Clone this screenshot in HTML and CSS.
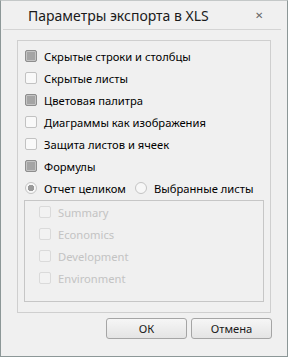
FILE: index.html
```html
<!DOCTYPE html>
<html>
<head>
  <title>Параметры экспорта в XLS</title>
  <link rel="stylesheet" href="styles.css">
</head>
<body>
  <div class="dialog">
    <div class="titlebar">
      <span class="title">Параметры экспорта в XLS</span>
      <span class="close">&#x2715;</span>
    </div>
    <div class="sep"></div>

    <div class="group">
      <label class="row"><span class="box checked"></span>Скрытые строки и столбцы</label>
      <label class="row"><span class="box"></span>Скрытые листы</label>
      <label class="row"><span class="box checked"></span>Цветовая палитра</label>
      <label class="row"><span class="box"></span>Диаграммы как изображения</label>
      <label class="row"><span class="box"></span>Защита листов и ячеек</label>
      <label class="row"><span class="box checked"></span>Формулы</label>
      <div class="row radios">
        <label class="radio-item"><span class="radio on"></span>Отчет целиком</label>
        <label class="radio-item"><span class="radio"></span>Выбранные листы</label>
      </div>
      <div class="sheets">
        <label class="row disabled"><span class="box"></span>Summary</label>
        <label class="row disabled"><span class="box"></span>Economics</label>
        <label class="row disabled"><span class="box"></span>Development</label>
        <label class="row disabled"><span class="box"></span>Environment</label>
      </div>
    </div>

    <div class="buttons">
      <button class="btn">ОК</button>
      <button class="btn">Отмена</button>
    </div>
  </div>
</body>
</html>
```

FILE: styles.css
```css
body {margin: 0; font: 11.2px "Noto Sans", "Open Sans", sans-serif; color: #000;}

.dialog {
  width: 288px;
  height: 357px;
  box-sizing: border-box;
  border: 1px solid #8c9797;
  border-top-color: #c4c8c8;
  background: #f0f0f0;
  display: flex;
  flex-direction: column;
}

.titlebar {
  height: 28px;
  display: flex;
  align-items: center;
  justify-content: space-between;
  padding: 0 24px 0 27px;
}
.title {font-size: 14px; color: #1a1a1a;}
.close {font-size: 10px; color: #666;}

.sep {height: 1px; margin: 0 6px 0 2px; background: #d4d4d4;}

.group {
  margin: 10px 16px 0 16px;
  height: 273px;
  box-sizing: border-box;
  border: 1px solid #cfcfcf;
  padding: 4px 6px 0 6px;
}

.row {
  height: 22px;
  display: flex;
  align-items: center;
  padding-left: 1px;
  white-space: nowrap;
}

.box {
  width: 10px;
  height: 10px;
  border: 1px solid #c2c2c2;
  border-radius: 2px;
  background: #f9f9f9;
  margin-right: 7px;
  flex: none;
}
.box.checked {
  border-color: #8e8e8e;
  background: #a5a5a5;
  box-shadow: inset 0 0 0 1px #c4c4c4;
}

.radio-item {display: flex; align-items: center; margin-right: 9px;}
.radio {
  width: 10px;
  height: 10px;
  border: 1px solid #c4c4c4;
  border-radius: 50%;
  background: #f7f7f7;
  margin-right: 7px;
  flex: none;
}
.radio.on {background: radial-gradient(circle, #9a9a9a 0 3px, #f7f7f7 3.5px);}

.sheets {
  margin: 1px 0 0 0;
  height: 102px;
  box-sizing: border-box;
  border: 1px solid #c6c6c6;
  padding: 0 0 0 13px;
}
.row.disabled {color: #c3c3c3;}
.row.disabled .box {border-color: #dadada; background: #f2f2f2;}

.buttons {
  display: flex;
  justify-content: flex-end;
  gap: 4px;
  margin: 5px 15px 0 0;
}
.btn {
  width: 81px;
  height: 21px;
  font: 11.2px "Noto Sans", "Open Sans", sans-serif;
  color: #1a1a1a;
  background: linear-gradient(#f6f6f6, #e4e4e4);
  border: 1px solid #a5a5a5;
  border-radius: 3px;
  padding: 0;
}
```
